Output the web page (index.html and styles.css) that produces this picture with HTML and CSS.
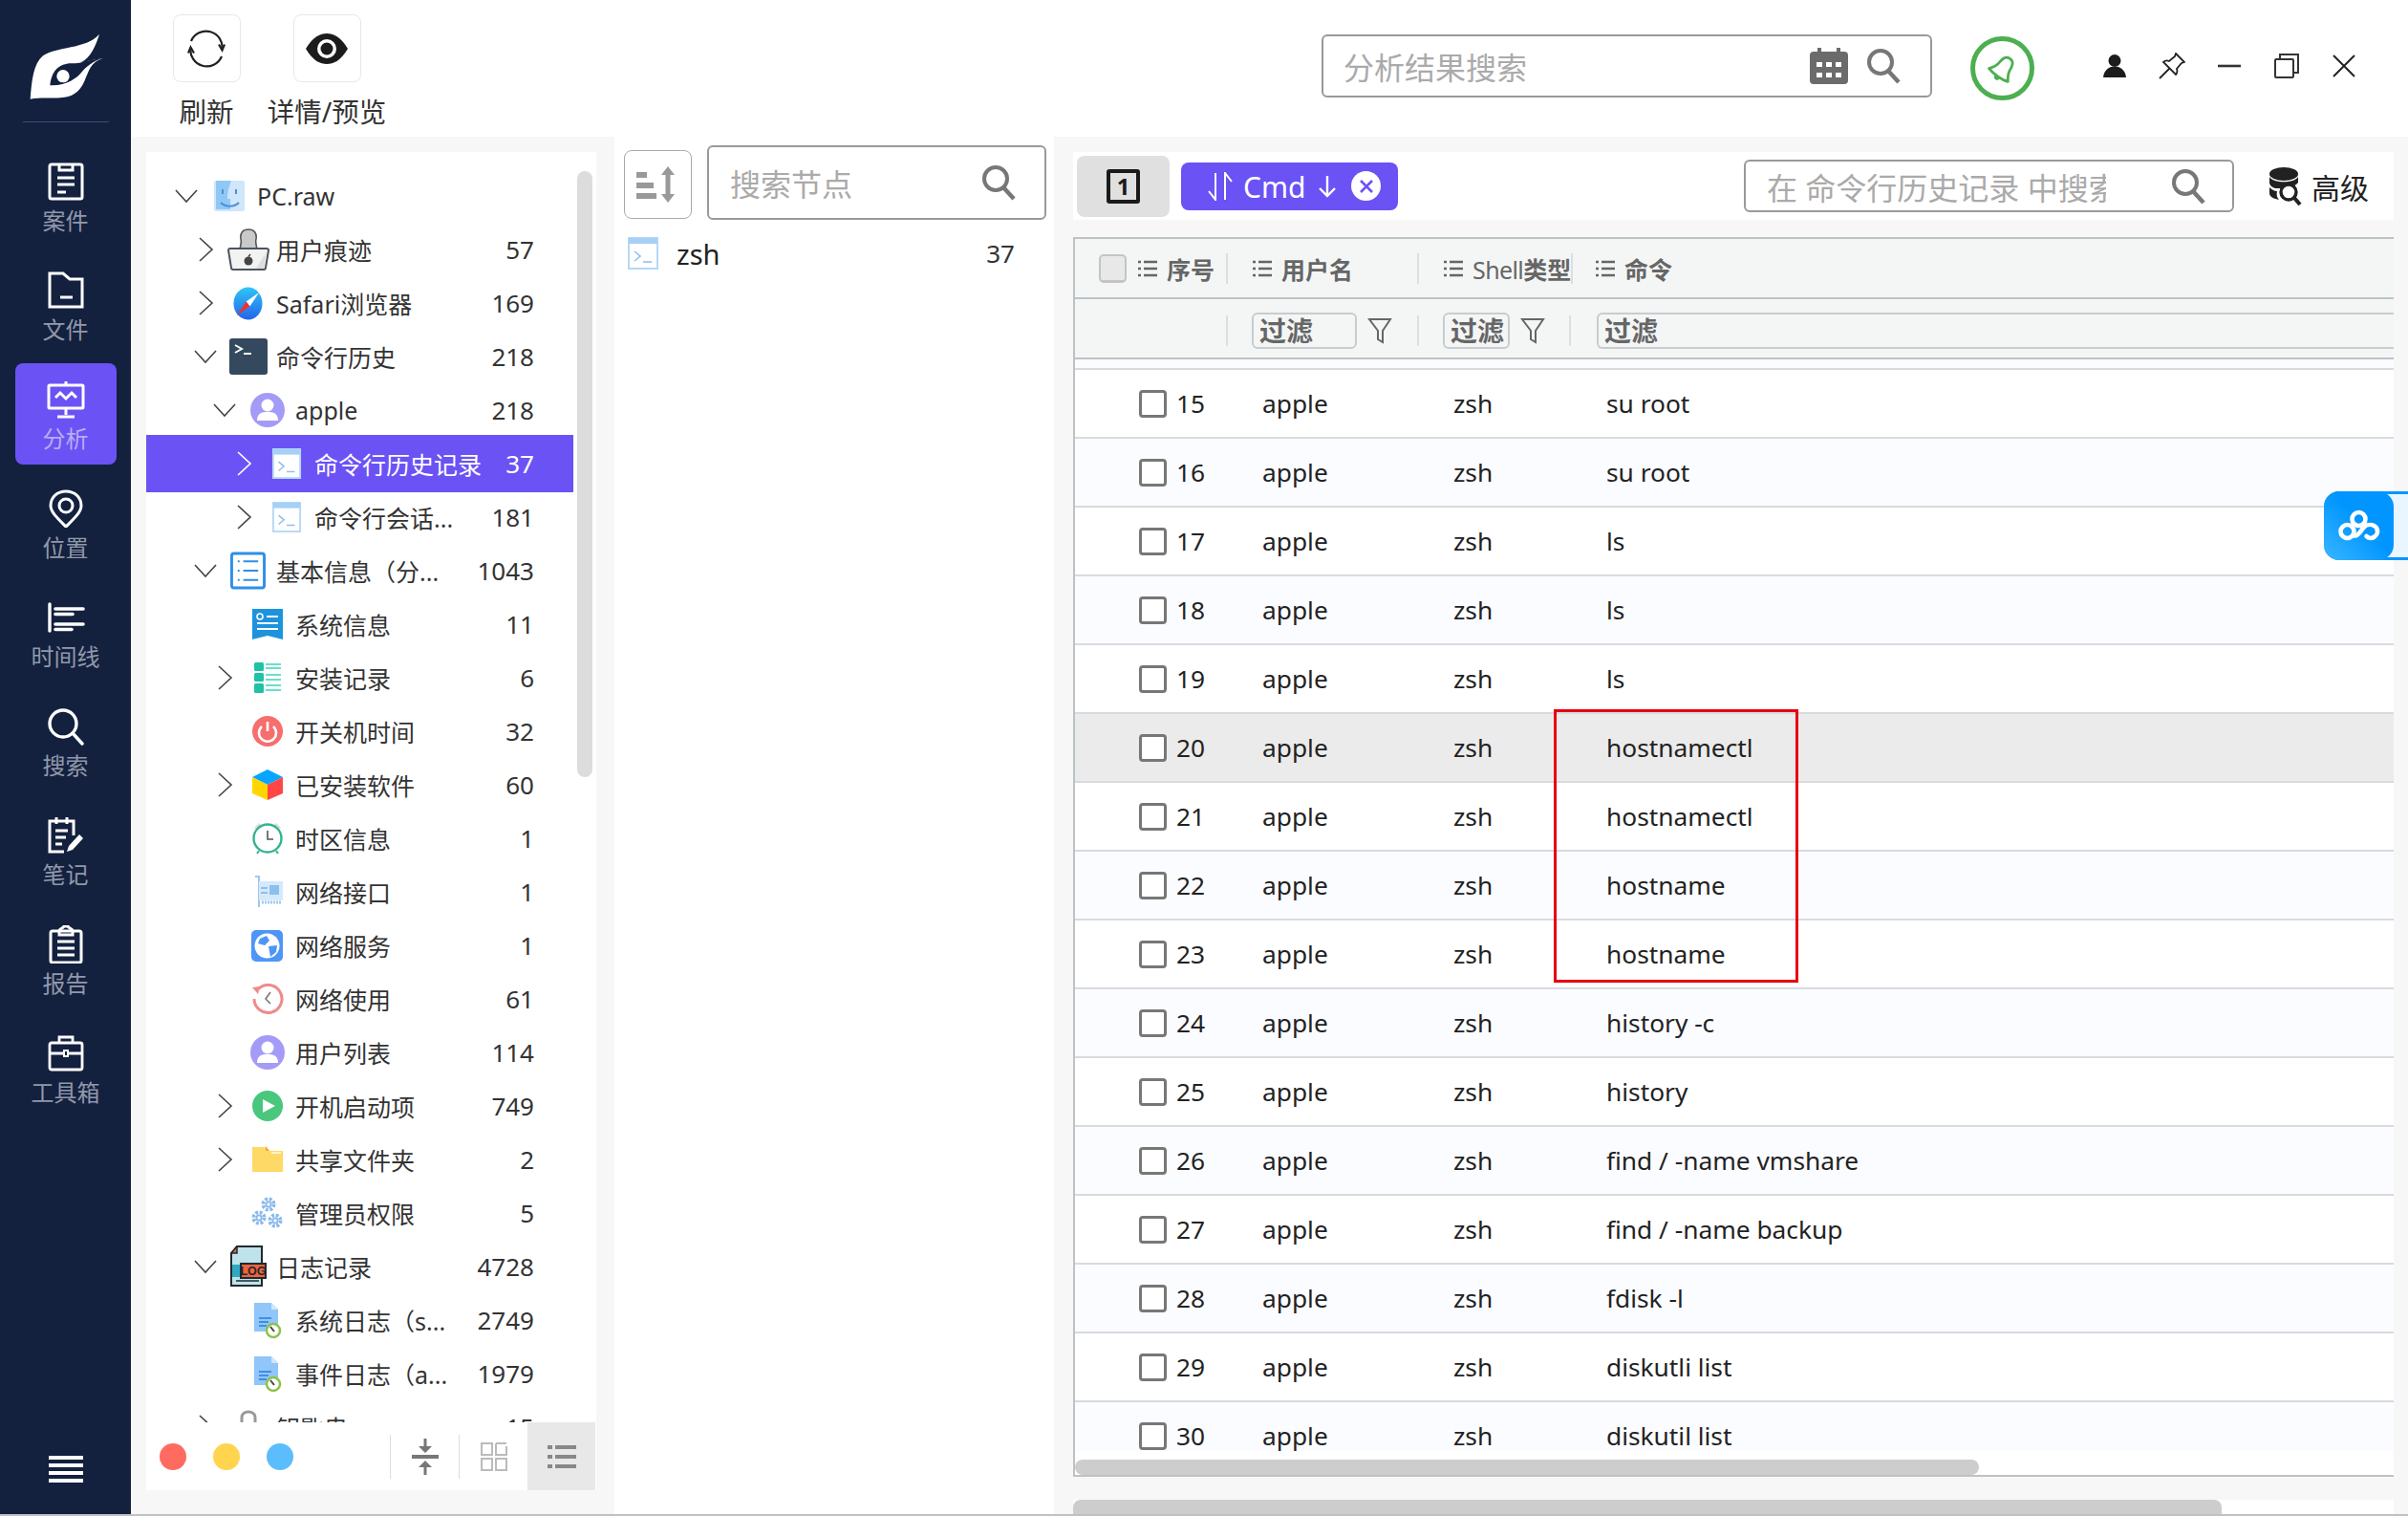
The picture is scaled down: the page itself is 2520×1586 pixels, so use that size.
FILE: index.html
```html
<!DOCTYPE html>
<html>
<head>
<meta charset="utf-8">
<title>分析</title>
<link rel="stylesheet" href="styles.css">
</head>
<body>
  <svg class="defs" width="0" height="0">
    <symbol id="chev-r" viewBox="0 0 30 30"><path d="M9 3 L22 15 L9 27" fill="none" stroke="currentColor" stroke-width="1.6"/></symbol>
    <symbol id="chev-d" viewBox="0 0 30 30"><path d="M4 9 L15 21 L26 9" fill="none" stroke="currentColor" stroke-width="1.6"/></symbol>
    <symbol id="term-win" viewBox="0 0 32 34">
      <rect x="1" y="1" width="30" height="32" fill="#fff" stroke="#b5d8f7" stroke-width="2"/>
      <rect x="1" y="1" width="30" height="6" fill="#a7d0f7"/>
      <path d="M7 15 L13 20 L7 25" fill="none" stroke="#8fc0f0" stroke-width="1.6"/>
      <path d="M16 26 H25" stroke="#8fc0f0" stroke-width="1.6"/>
    </symbol>
    <symbol id="user" viewBox="0 0 36 36">
      <circle cx="18" cy="18" r="18" fill="#a39bf7"/>
      <circle cx="18" cy="13" r="6.5" fill="#fff"/>
      <path d="M7 29 C7 21 12 20 18 20 C24 20 29 21 29 29 Z" fill="#fff"/>
    </symbol>
    <symbol id="log-file" viewBox="0 0 32 40">
      <path d="M2 2 H20 L27 9 V32 H2 Z" fill="#90c6f9"/>
      <path d="M20 2 L27 9 H20 Z" fill="#cfe6fc"/>
      <path d="M7 18 H20 M7 22 H17 M7 26 H15" stroke="#3f8fe0" stroke-width="2"/>
      <circle cx="22" cy="31" r="7" fill="#fff" stroke="#8bc34a" stroke-width="2.5"/>
      <path d="M19 27 L23 32" stroke="#444" stroke-width="2"/>
    </symbol>
    <symbol id="mag" viewBox="0 0 36 38">
      <circle cx="15" cy="15" r="12" fill="none" stroke="#777" stroke-width="4"/>
      <path d="M23 24 L34 36" stroke="#777" stroke-width="4.5"/>
    </symbol>
    <symbol id="lines" viewBox="0 0 20 20">
      <path d="M0 3 H3 M6 3 H20 M0 10 H3 M6 10 H20 M0 17 H3 M6 17 H20" stroke="#666" stroke-width="2.4"/>
    </symbol>
    <symbol id="funnel" viewBox="0 0 26 28">
      <path d="M2 2 H24 L16 14 V26 L11 23 V14 Z" fill="none" stroke="#666" stroke-width="2"/>
    </symbol>
    <symbol id="gear" viewBox="0 0 16 16">
      <circle cx="8" cy="8" r="2.600" fill="none" stroke="#8ab8ec" stroke-width="1.800"/>
      <circle cx="8" cy="8" r="5.600" fill="none" stroke="#8ab8ec" stroke-width="3.800" stroke-dasharray="2.800 1.600"/>
    </symbol>
  </svg>

  <div class="app">
    <aside class="sidebar">
      <div class="logo">
        <svg viewBox="0 0 411 411" width="137" height="137">
          <path d="M95 281 C100 220 105 170 135 145 C175 115 270 125 312 77 C300 115 285 150 255 165 L323 153 C285 165 280 190 265 225 C250 260 225 275 190 277 C160 279 125 276 95 281 Z" fill="#fff"/>
          <path d="M157 238 C160 205 175 175 210 170 C230 167 245 172 262 163 L323 153 C290 162 270 180 255 198 C240 215 210 240 157 238 Z" fill="#13213f"/>
          <circle cx="198" cy="209" r="20" fill="#fff"/>
        </svg>
      </div>
      <nav class="nav">
        <a class="nav-item">
          <svg viewBox="0 0 40 40" width="40" height="40" fill="none" stroke="#fff" stroke-width="3">
            <rect x="3" y="2" width="34" height="36" rx="2"/><path d="M13 2 V8 H27 V2 M11 16 H29 M11 23 H29 M11 31 H20"/>
          </svg>
          <span>案件</span>
        </a>
        <a class="nav-item">
          <svg viewBox="0 0 40 40" width="40" height="40" fill="none" stroke="#fff" stroke-width="3">
            <path d="M3 37 V2 H17 L24 8 H37 V37 Z M14 27 H27"/>
          </svg>
          <span>文件</span>
        </a>
        <a class="nav-item active">
          <svg viewBox="0 0 40 40" width="40" height="40" fill="none" stroke="#fff" stroke-width="3">
            <rect x="2" y="5" width="36" height="24" rx="1"/><path d="M20 1 V5 M20 29 V36 M11 38 H29 M9 18 L14 13 L20 19 L26 13 L31 18"/>
          </svg>
          <span>分析</span>
        </a>
        <a class="nav-item">
          <svg viewBox="0 0 40 40" width="40" height="40" fill="none" stroke="#fff" stroke-width="3">
            <path d="M20 39 C12 31 4 24 4 17 C4 8 11 2 20 2 C29 2 36 8 36 17 C36 24 28 31 20 39 Z"/><circle cx="20" cy="17" r="7"/>
          </svg>
          <span>位置</span>
        </a>
        <a class="nav-item">
          <svg viewBox="0 0 40 40" width="40" height="40" fill="none" stroke="#fff" stroke-linecap="round">
            <path d="M3 6 V34" stroke-width="3.400"/>
            <path d="M9 11 H38 M9 16.500 H27 M9 27 H38 M9 32.500 H26" stroke-width="3.600"/>
          </svg>
          <span>时间线</span>
        </a>
        <a class="nav-item">
          <svg viewBox="0 0 40 40" width="40" height="40" fill="none" stroke="#fff" stroke-width="3.400" stroke-linecap="round">
            <circle cx="17" cy="17" r="14"/><path d="M27 27 L37 38"/>
          </svg>
          <span>搜索</span>
        </a>
        <a class="nav-item">
          <svg viewBox="0 0 40 40" width="40" height="40" fill="none" stroke="#fff" stroke-width="3">
            <path d="M28 20 V5 H3 V37 H18 M10 1 V8 M21 1 V8 M9 15 H22 M9 22 H20 M9 29 H16"/>
            <path d="M21 37 L23 31 L34 19 L38 23 L27 35 Z" fill="#fff" stroke="none"/>
          </svg>
          <span>笔记</span>
        </a>
        <a class="nav-item">
          <svg viewBox="0 0 40 40" width="40" height="40" fill="none" stroke="#fff" stroke-width="3">
            <rect x="4" y="6" width="32" height="33" rx="2"/><path d="M13 6 C13 3 17 4 18 1 H22 C23 4 27 3 27 6 V10 H13 Z M11 17 H29 M11 24 H29 M11 31 H29"/>
          </svg>
          <span>报告</span>
        </a>
        <a class="nav-item">
          <svg viewBox="0 0 40 40" width="40" height="40" fill="none" stroke="#fff" stroke-width="2.800">
            <rect x="3" y="9" width="34" height="28" rx="2"/><path d="M13 9 V3 H27 V9 M3 20 H17 M23 20 H37"/><path d="M18 17 H22 V23 H18 Z" stroke-width="2"/>
          </svg>
          <span>工具箱</span>
        </a>
      </nav>
      <div class="burger"><i></i><i></i><i></i><i></i></div>
    </aside>

    <main class="main">
      <header class="topbar">
        <div class="tools">
          <div class="tool">
            <div class="tool-btn">
              <svg viewBox="0 0 40 40" width="40" height="40" fill="none" stroke="#222" stroke-width="2.200">
                <path d="M4 12 A17 17 0 0 1 36.500 21"/><path d="M33 15.500 L36.500 21.500 L39 15.500"/>
                <path d="M36 28 A17 17 0 0 1 3.500 19"/><path d="M7 24.500 L3.500 18.500 L1 24.500"/>
              </svg>
            </div>
            <span>刷新</span>
          </div>
          <div class="tool">
            <div class="tool-btn">
              <svg viewBox="0 0 44 32" width="44" height="32">
                <path d="M0 16 C8 3 15 0 22 0 C29 0 36 3 44 16 C36 29 29 32 22 32 C15 32 8 29 0 16 Z" fill="#1c1c1c"/>
                <circle cx="22" cy="16" r="10" fill="#fff"/><circle cx="22" cy="16" r="6.5" fill="#1c1c1c"/>
              </svg>
            </div>
            <span>详情/预览</span>
          </div>
        </div>
        <div class="top-right">
          <div class="global-search">
            <span class="ph">分析结果搜索</span>
            <svg class="cal" viewBox="0 0 40 38" width="40" height="38">
              <rect x="0" y="4" width="40" height="34" rx="4" fill="#6b6b6b"/>
              <rect x="8" y="0" width="4" height="8" fill="#6b6b6b"/><rect x="28" y="0" width="4" height="8" fill="#6b6b6b"/>
              <g fill="#fff"><rect x="7" y="15" width="6" height="5"/><rect x="17" y="15" width="6" height="5"/><rect x="27" y="15" width="6" height="5"/><rect x="7" y="26" width="6" height="5"/><rect x="17" y="26" width="6" height="5"/><rect x="27" y="26" width="6" height="5"/></g>
            </svg>
            <svg class="mag" width="38" height="38"><use href="#mag"/></svg>
          </div>
          <div class="notice">
            <svg viewBox="0 0 32 32" width="32" height="32" fill="none" stroke="#4caf50" stroke-width="2.800" stroke-linejoin="round">
              <g transform="rotate(35 16 16)"><path d="M16 3 C10 3 9.500 9 9 14 C8.500 18 6 21 4 24 C10 26 22 26 28 24 C26 21 23.500 18 23 14 C22.500 9 22 3 16 3 Z"/><path d="M14 26 C14.500 29 17.500 29 18 26"/></g>
            </svg>
          </div>
          <div class="win-btns">
            <span class="win-btn">
              <svg viewBox="0 0 24 24" width="24" height="24" fill="#1c1c1c"><circle cx="12" cy="6.5" r="6.5"/><path d="M0 24 C1 17 4 15 8 13 H16 C20 15 23 17 24 24 Z"/></svg>
            </span>
            <span class="win-btn">
              <svg viewBox="0 0 28 28" width="28" height="28" fill="none" stroke="#222" stroke-width="1.8"><path d="M18 1 L27 10 L24 11 L19 17 C20 20 19 22 18 23 L5 10 C7 8 9 8 11 9 L17 4 Z M11 17 L1 27"/></svg>
            </span>
            <span class="win-btn">
              <svg viewBox="0 0 24 24" width="24" height="24"><path d="M0 12 H24" stroke="#333" stroke-width="2.6"/></svg>
            </span>
            <span class="win-btn">
              <svg viewBox="0 0 26 26" width="26" height="26" fill="none" stroke="#333" stroke-width="2"><rect x="1" y="6" width="19" height="19" rx="1"/><path d="M6 6 V1 H25 V20 H20"/></svg>
            </span>
            <span class="win-btn">
              <svg viewBox="0 0 24 24" width="24" height="24" fill="none" stroke="#222" stroke-width="2"><path d="M1 1 L23 23 M23 1 L1 23"/></svg>
            </span>
          </div>
        </div>
      </header>

      <div class="content">
        <section class="tree-panel">
          <div class="tree-body">
            <div class="tree-list">
              <div class="row l0"><svg class="chev"><use href="#chev-d"/></svg><span class="ico">
                <svg viewBox="0 0 32 32" width="32" height="32"><rect width="32" height="32" rx="2" fill="#cfe6fb"/><path d="M2 0 H18 C15 8 14 14 14 19 H17 V30 H2 Z" fill="#90c8f5"/><path d="M9 9 V14 M23 9 V14 M7 23 C12 28 21 28 26 23" stroke="#4a90d9" stroke-width="2" fill="none"/></svg>
              </span><span class="name">PC.raw</span><span class="num"></span></div>

              <div class="row l1"><svg class="chev"><use href="#chev-r"/></svg><span class="ico">
                <svg viewBox="0 0 44 44" width="44" height="44"><path d="M13 22 C14 16 15 14 14 11 C13 5 16 1 22 1 C28 1 31 5 30 11 C29 14 30 16 31 22 Z" fill="#c9c9c9" stroke="#555" stroke-width="1.600"/><path d="M3 21 H41 C42 21 43 22 43 23 L40 41 C40 42 39 43 38 43 H6 C5 43 4 42 4 41 L1 23 C1 22 2 21 3 21 Z" fill="#f2f2f2" stroke="#4a5560" stroke-width="2"/><path d="M30 42 L40 26 L38 42 Z" fill="#ddd"/><circle cx="22" cy="34" r="4.500" fill="#444"/><path d="M22 29.500 L24 27" stroke="#444" stroke-width="1.500"/></svg>
              </span><span class="name">用户痕迹</span><span class="num">57</span></div>

              <div class="row l1"><svg class="chev"><use href="#chev-r"/></svg><span class="ico">
                <svg viewBox="0 0 32 36" width="31" height="35"><defs><linearGradient id="saf" x1="0" y1="0" x2="0" y2="1"><stop offset="0" stop-color="#2fc6f6"/><stop offset="1" stop-color="#2364ea"/></linearGradient></defs><ellipse cx="16" cy="18" rx="15.5" ry="17.5" fill="url(#saf)"/><path d="M14 16 L28 6 L18 21 Z" fill="#fff"/><path d="M14 16 L18 21 L4 31 Z" fill="#f0302c"/></svg>
              </span><span class="name">Safari浏览器</span><span class="num">169</span></div>

              <div class="row l1"><svg class="chev"><use href="#chev-d"/></svg><span class="ico">
                <svg viewBox="0 0 40 38" width="40" height="38"><rect width="40" height="38" rx="3" fill="#34495e"/><path d="M6 7 L13 11 L6 15" fill="none" stroke="#fff" stroke-width="2"/><path d="M15 16 H23" stroke="#fff" stroke-width="2"/></svg>
              </span><span class="name">命令行历史</span><span class="num">218</span></div>

              <div class="row l2"><svg class="chev"><use href="#chev-d"/></svg><span class="ico"><svg width="36" height="36"><use href="#user"/></svg></span><span class="name">apple</span><span class="num">218</span></div>

              <div class="row l3 selected"><svg class="chev"><use href="#chev-r"/></svg><span class="ico"><svg width="32" height="32"><use href="#term-win"/></svg></span><span class="name">命令行历史记录</span><span class="num">37</span></div>

              <div class="row l3"><svg class="chev"><use href="#chev-r"/></svg><span class="ico"><svg width="32" height="32"><use href="#term-win"/></svg></span><span class="name">命令行会话...</span><span class="num">181</span></div>

              <div class="row l1"><svg class="chev"><use href="#chev-d"/></svg><span class="ico">
                <svg viewBox="0 0 38 40" width="37" height="40"><rect x="1.5" y="1.5" width="35" height="37" rx="2.5" fill="#fff" stroke="#2f8fe6" stroke-width="3"/><path d="M8 10 H10 M14 10 H30 M8 20 H10 M14 20 H30 M8 30 H10 M14 30 H30" stroke="#2f8fe6" stroke-width="2"/></svg>
              </span><span class="name">基本信息（分...</span><span class="num">1043</span></div>

              <div class="row l2 leaf"><i class="chev"></i><span class="ico">
                <svg viewBox="0 0 32 32" width="32" height="32"><path d="M0 0 H32 V32 L16 28 L0 32 Z" fill="#1d93de"/><circle cx="8" cy="8" r="3" fill="none" stroke="#fff" stroke-width="1.6"/><path d="M15 8 H27 M5 15 H27 M5 21 H27" stroke="#fff" stroke-width="2"/></svg>
              </span><span class="name">系统信息</span><span class="num">11</span></div>

              <div class="row l2"><svg class="chev"><use href="#chev-r"/></svg><span class="ico">
                <svg viewBox="0 0 28 32" width="28" height="32" fill="#1fc2a5"><rect width="10" height="9" rx="1.5"/><rect y="11" width="10" height="9" rx="1.5"/><rect y="22" width="10" height="10" rx="1.5"/><path d="M12 2 H28 M12 6 H28 M12 13 H28 M12 18 H28 M12 24 H28 M12 29 H28" stroke="#38d6bb" stroke-width="1.6"/></svg>
              </span><span class="name">安装记录</span><span class="num">6</span></div>

              <div class="row l2 leaf"><i class="chev"></i><span class="ico">
                <svg viewBox="0 0 32 32" width="32" height="32"><circle cx="16" cy="16" r="16" fill="#f76e6e"/><path d="M10 11 A9 9 0 1 0 22 11" fill="none" stroke="#fff" stroke-width="2.6"/><path d="M16 6 V16" stroke="#fff" stroke-width="2.6"/></svg>
              </span><span class="name">开关机时间</span><span class="num">32</span></div>

              <div class="row l2"><svg class="chev"><use href="#chev-r"/></svg><span class="ico">
                <svg viewBox="0 0 32 32" width="32" height="32"><path d="M16 0 L32 8 L16 16 L0 8 Z" fill="#08a5ff"/><path d="M0 8 L16 16 V32 L0 25 Z" fill="#ffd500"/><path d="M32 8 L16 16 V32 L32 25 Z" fill="#ff4646"/></svg>
              </span><span class="name">已安装软件</span><span class="num">60</span></div>

              <div class="row l2 leaf"><i class="chev"></i><span class="ico">
                <svg viewBox="0 0 34 34" width="34" height="34"><path d="M4 7 L9 2 M30 7 L25 2" stroke="#ddd" stroke-width="3"/><circle cx="17" cy="17" r="14.5" fill="#fff" stroke="#33b38f" stroke-width="2.4"/><path d="M17 9 V18 H23" fill="none" stroke="#555" stroke-width="1.6"/><path d="M8 30 L6 33 M26 30 L28 33" stroke="#33b38f" stroke-width="2"/></svg>
              </span><span class="name">时区信息</span><span class="num">1</span></div>

              <div class="row l2 leaf"><i class="chev"></i><span class="ico">
                <svg viewBox="0 0 32 34" width="32" height="34"><path d="M3 1 H7 V33" fill="none" stroke="#9cc9f2" stroke-width="2"/><rect x="7" y="6" width="25" height="20" fill="#d6e9fa"/><rect x="18" y="10" width="10" height="10" fill="#8dbfee"/><path d="M9 13 H16 M9 18 H16" stroke="#8dbfee" stroke-width="2"/><path d="M10 28 H30" stroke="#9cc9f2" stroke-width="3" stroke-dasharray="2 1"/></svg>
              </span><span class="name">网络接口</span><span class="num">1</span></div>

              <div class="row l2 leaf"><i class="chev"></i><span class="ico">
                <svg viewBox="0 0 33 33" width="33" height="33"><rect width="33" height="33" rx="5" fill="#4d96f7"/><circle cx="16.500" cy="16.500" r="13" fill="#fff"/><path d="M9 9 L16 6 L19 11 L14 16 L7 14 Z M18 17 L27 16 L26 23 L20 28 Z" fill="#4d96f7"/></svg>
              </span><span class="name">网络服务</span><span class="num">1</span></div>

              <div class="row l2 leaf"><i class="chev"></i><span class="ico">
                <svg viewBox="0 0 34 34" width="34" height="34" fill="none"><path d="M7 7 A14.500 14.500 0 1 1 3 17" stroke="#f08a8a" stroke-width="3"/><path d="M1 5 L9 4 L7 12 Z" fill="#f08a8a"/><path d="M20 10 L15 17 L20 22" stroke="#777" stroke-width="1.6"/></svg>
              </span><span class="name">网络使用</span><span class="num">61</span></div>

              <div class="row l2 leaf"><i class="chev"></i><span class="ico"><svg width="36" height="36"><use href="#user"/></svg></span><span class="name">用户列表</span><span class="num">114</span></div>

              <div class="row l2"><svg class="chev"><use href="#chev-r"/></svg><span class="ico">
                <svg viewBox="0 0 32 32" width="32" height="32"><circle cx="16" cy="16" r="16" fill="#48c77d"/><path d="M11 9 L24 16 L11 23 Z" fill="#fff"/></svg>
              </span><span class="name">开机启动项</span><span class="num">749</span></div>

              <div class="row l2"><svg class="chev"><use href="#chev-r"/></svg><span class="ico">
                <svg viewBox="0 0 32 28" width="32" height="28"><path d="M0 1 H14 L18 5 H32 V27 H0 Z" fill="#ffd966"/><path d="M14 0 L18 5 H14 Z" fill="#f7a33a"/><path d="M20 7 H30" stroke="#fff3c9" stroke-width="2"/></svg>
              </span><span class="name">共享文件夹</span><span class="num">2</span></div>

              <div class="row l2 leaf"><i class="chev"></i><span class="ico">
                <svg viewBox="0 0 34 34" width="34" height="34"><use href="#gear" x="10" y="0" width="16" height="16"/><use href="#gear" x="0" y="14" width="16" height="16"/><use href="#gear" x="17" y="17" width="16" height="16"/></svg>
              </span><span class="name">管理员权限</span><span class="num">5</span></div>

              <div class="row l1"><svg class="chev"><use href="#chev-d"/></svg><span class="ico">
                <svg viewBox="0 0 38 44" width="38" height="44"><path d="M7 1 H33 V42 H1 V8 Z" fill="#bfe3ea" stroke="#1f2a30" stroke-width="2"/><path d="M7 1 V8 H1 Z" fill="#f0623c" stroke="#1f2a30" stroke-width="1.500"/><rect x="2" y="20" width="11" height="13" fill="#2fa8c0"/><rect x="11" y="19" width="26" height="15" fill="#f0623c" stroke="#1f2a30" stroke-width="2"/><path d="M6 37 H30" stroke="#1f2a30" stroke-width="1.500"/><text x="24" y="31" class="log-text">LOG</text></svg>
              </span><span class="name">日志记录</span><span class="num">4728</span></div>

              <div class="row l2 leaf"><i class="chev"></i><span class="ico"><svg width="32" height="40"><use href="#log-file"/></svg></span><span class="name">系统日志（s...</span><span class="num">2749</span></div>

              <div class="row l2 leaf"><i class="chev"></i><span class="ico"><svg width="32" height="40"><use href="#log-file"/></svg></span><span class="name">事件日志（a...</span><span class="num">1979</span></div>

              <div class="row l1"><svg class="chev"><use href="#chev-r"/></svg><span class="ico">
                <svg viewBox="0 0 32 40" width="32" height="40"><path d="M9 16 V10 C9 2 23 2 23 10 V16" fill="none" stroke="#999" stroke-width="3"/><rect x="4" y="15" width="24" height="22" rx="3" fill="#c4c4c4"/></svg>
              </span><span class="name">钥匙串</span><span class="num">15</span></div>
            </div>
            <div class="tree-scroll"></div>
          </div>
          <div class="tree-foot">
            <i class="dot red"></i><i class="dot yellow"></i><i class="dot blue"></i>
            <div class="foot-tools">
              <i class="foot-sep"></i>
              <span class="foot-btn">
                <svg viewBox="0 0 28 38" width="28" height="38" fill="#777"><path d="M12.500 0 H15.500 V8 H21 L14 15 L7 8 H12.500 Z"/><rect x="0" y="17" width="28" height="4"/><path d="M14 23 L21 30 H15.500 V38 H12.500 V30 H7 Z"/></svg>
              </span>
              <i class="foot-sep"></i>
              <span class="foot-btn">
                <svg viewBox="0 0 28 30" width="28" height="30" fill="none" stroke="#bbb" stroke-width="2"><rect x="1" y="1" width="11" height="12"/><path d="M16 1 H27 M27 4 V13 H16 V1"/><rect x="1" y="17" width="11" height="12"/><rect x="16" y="17" width="11" height="12"/></svg>
              </span>
              <span class="foot-btn on">
                <svg viewBox="0 0 30 24" width="30" height="24" fill="#888"><rect y="0" width="5" height="4"/><rect x="8" y="0" width="22" height="4"/><rect y="10" width="5" height="4"/><rect x="8" y="10" width="22" height="4"/><rect y="20" width="5" height="4"/><rect x="8" y="20" width="22" height="4"/></svg>
              </span>
            </div>
          </div>
        </section>

        <section class="mid-panel">
          <div class="mid-head">
            <div class="sort-btn">
              <svg viewBox="0 0 46 38" width="46" height="38" fill="#999"><rect x="0" y="6" width="11" height="6"/><rect x="0" y="17" width="18" height="6"/><rect x="0" y="28" width="21" height="6"/><path d="M33 0 L40 9 H35.500 V29 H40 L33 38 L26 29 H30.500 V9 H26 Z"/></svg>
            </div>
            <div class="node-search">
              <span class="ph">搜索节点</span>
              <svg class="mag" width="36" height="38"><use href="#mag"/></svg>
            </div>
          </div>
          <div class="mid-row">
            <svg width="34" height="34"><use href="#term-win"/></svg>
            <span class="mid-name">zsh</span>
            <span class="num">37</span>
          </div>
        </section>

        <section class="right-panel">
          <div class="toolbar">
            <div class="page-btn"><span class="page-num">1</span></div>
            <div class="chip">
              <svg viewBox="0 0 28 30" width="28" height="30" fill="none" stroke="#fff" stroke-width="2"><path d="M9 1 V29 L2 20 M19 29 V1 L26 10"/></svg>
              <span class="chip-label">Cmd</span>
              <svg viewBox="0 0 20 24" width="20" height="24" fill="none" stroke="#fff" stroke-width="2.400"><path d="M10 1 V22 M2 14 L10 22 L18 14"/></svg>
              <span class="chip-x">
                <svg viewBox="0 0 14 14" width="14" height="14" fill="none" stroke="#6b52f5" stroke-width="2.600"><path d="M1 1 L13 13 M13 1 L1 13"/></svg>
              </span>
            </div>
            <div class="table-search">
              <div class="ph-clip"><span class="ph">在 命令行历史记录 中搜索</span></div>
              <svg class="mag" width="36" height="38"><use href="#mag"/></svg>
            </div>
            <div class="adv">
              <svg viewBox="0 0 36 40" width="36" height="40">
                <ellipse cx="16" cy="7" rx="15" ry="7" fill="#222"/><path d="M1 10 C5 17 27 17 31 10 V16 C27 22 12 22 7 22 C4 21 1 19 1 16 Z" fill="#222"/><path d="M1 21 C3 23 6 25 9 25 C8 29 9 32 11 34 C6 33 1 31 1 27 Z" fill="#222"/>
                <circle cx="21" cy="26" r="8" fill="#fff" stroke="#222" stroke-width="3.400"/><path d="M27 32 L33 39" stroke="#222" stroke-width="4"/>
              </svg>
              <span>高级</span>
            </div>
          </div>

          <div class="table">
            <div class="thead cols">
              <div class="th th-first"><i class="head-check"></i><svg width="20" height="20"><use href="#lines"/></svg><b>序号</b><i class="col-sep"></i></div>
              <div class="th"><svg width="20" height="20"><use href="#lines"/></svg><b>用户名</b><i class="col-sep"></i></div>
              <div class="th"><svg width="20" height="20"><use href="#lines"/></svg><b><span class="thin">Shell</span>类型</b><i class="col-sep"></i></div>
              <div class="th th-last"><svg width="20" height="20"><use href="#lines"/></svg><b>命令</b></div>
            </div>
            <div class="tfilter cols">
              <div class="tf"><i class="col-sep"></i></div>
              <div class="tf"><span class="filter-input w110">过滤</span><svg class="funnel" width="26" height="28"><use href="#funnel"/></svg><i class="col-sep"></i></div>
              <div class="tf"><span class="filter-input w70">过滤</span><svg class="funnel" width="26" height="28"><use href="#funnel"/></svg><i class="col-sep"></i></div>
              <div class="tf tf-last"><span class="filter-input fill">过滤</span></div>
            </div>
            <div class="tband"></div>
            <div class="tbody">
              <div class="tr cols"><div class="td td-first"><i class="check"></i>15</div><div class="td">apple</div><div class="td">zsh</div><div class="td td-cmd">su root</div></div>
              <div class="tr cols"><div class="td td-first"><i class="check"></i>16</div><div class="td">apple</div><div class="td">zsh</div><div class="td td-cmd">su root</div></div>
              <div class="tr cols"><div class="td td-first"><i class="check"></i>17</div><div class="td">apple</div><div class="td">zsh</div><div class="td td-cmd">ls</div></div>
              <div class="tr cols"><div class="td td-first"><i class="check"></i>18</div><div class="td">apple</div><div class="td">zsh</div><div class="td td-cmd">ls</div></div>
              <div class="tr cols"><div class="td td-first"><i class="check"></i>19</div><div class="td">apple</div><div class="td">zsh</div><div class="td td-cmd">ls</div></div>
              <div class="tr cols hover"><div class="td td-first"><i class="check"></i>20</div><div class="td">apple</div><div class="td">zsh</div><div class="td td-cmd">hostnamectl</div></div>
              <div class="tr cols"><div class="td td-first"><i class="check"></i>21</div><div class="td">apple</div><div class="td">zsh</div><div class="td td-cmd">hostnamectl</div></div>
              <div class="tr cols"><div class="td td-first"><i class="check"></i>22</div><div class="td">apple</div><div class="td">zsh</div><div class="td td-cmd">hostname</div></div>
              <div class="tr cols"><div class="td td-first"><i class="check"></i>23</div><div class="td">apple</div><div class="td">zsh</div><div class="td td-cmd">hostname</div></div>
              <div class="tr cols"><div class="td td-first"><i class="check"></i>24</div><div class="td">apple</div><div class="td">zsh</div><div class="td td-cmd">history -c</div></div>
              <div class="tr cols"><div class="td td-first"><i class="check"></i>25</div><div class="td">apple</div><div class="td">zsh</div><div class="td td-cmd">history</div></div>
              <div class="tr cols"><div class="td td-first"><i class="check"></i>26</div><div class="td">apple</div><div class="td">zsh</div><div class="td td-cmd">find / -name vmshare</div></div>
              <div class="tr cols"><div class="td td-first"><i class="check"></i>27</div><div class="td">apple</div><div class="td">zsh</div><div class="td td-cmd">find / -name backup</div></div>
              <div class="tr cols"><div class="td td-first"><i class="check"></i>28</div><div class="td">apple</div><div class="td">zsh</div><div class="td td-cmd">fdisk -l</div></div>
              <div class="tr cols"><div class="td td-first"><i class="check"></i>29</div><div class="td">apple</div><div class="td">zsh</div><div class="td td-cmd">diskutli list</div></div>
              <div class="tr cols"><div class="td td-first"><i class="check"></i>30</div><div class="td">apple</div><div class="td">zsh</div><div class="td td-cmd">diskutil list</div></div>
              <div class="mark-box"></div>
            </div>
            <div class="tscroll"><div class="tscroll-thumb"></div></div>
          </div>
          <div class="outer-scroll"><div class="outer-thumb"></div></div>
        </section>
      </div>
    </main>
  </div>
  <div class="bottom-line"></div>

  <div class="float-tab">
    <div class="float-tile">
      <svg viewBox="0 0 73 72" width="73" height="72" fill="none" stroke="#fff" stroke-width="4.600" stroke-linecap="round">
        <circle cx="36.500" cy="29" r="7"/><circle cx="24.500" cy="42" r="7"/>
        <path d="M30.500 46 C33.500 48 37.500 44 40.500 39 C43.500 35 48.500 34 52.500 36 C56.500 38 57.500 44 53.500 47 C50.500 50 46.500 49 44.500 47"/>
      </svg>
    </div>
  </div>
</body>
</html>
```

FILE: styles.css
```css
/* page frame */
* {
  box-sizing: border-box;
}

html, body {
  margin: 0;
  width: 2520px;
  height: 1586px;
  overflow: hidden;
  background: #fff;
  font-family: "Noto Sans", "Noto Sans CJK SC", sans-serif;
  color: #333;
}

.defs {
  position: absolute;
}

.app {
  display: flex;
  height: 1584px;
}

.bottom-line {
  height: 2px;
  background: #bcc2c6;
}

/* left navigation */
.sidebar {
  width: 137px;
  flex: none;
  background: #13213f;
  display: flex;
  flex-direction: column;
  align-items: center;
}

.logo {
  width: 90px;
  height: 128px;
  padding-top: 10px;
  border-bottom: 1px solid #3c4c78;
  display: flex;
  justify-content: center;
}

.logo svg {
  flex: none;
}

.nav {
  margin-top: 24px;
  display: flex;
  flex-direction: column;
  gap: 8px;
}

.nav-item {
  width: 106px;
  height: 106px;
  padding-top: 18px;
  border-radius: 8px;
  display: flex;
  flex-direction: column;
  align-items: center;
  color: #9198aa;
  font-size: 24px;
  line-height: 42px;
}

.nav-item svg {
  display: block;
  flex: none;
}

.nav-item.active {
  background: #6b52f5;
  color: #b7aef3;
}

.burger {
  margin-top: auto;
  margin-bottom: 33px;
  width: 36px;
  display: flex;
  flex-direction: column;
  gap: 4px;
}

.burger i {
  height: 4px;
  background: #fff;
}

/* top bar */
.main {
  flex: 1;
  min-width: 0;
  display: flex;
  flex-direction: column;
}

.topbar {
  height: 143px;
  flex: none;
  display: flex;
  justify-content: space-between;
}

.tools {
  display: flex;
  gap: 2px;
  padding-left: 17px;
}

.tool {
  width: 124px;
  padding-top: 15px;
  display: flex;
  flex-direction: column;
  align-items: center;
  font-size: 28.5px;
  line-height: 36px;
  color: #333;
  white-space: nowrap;
}

.tool-btn {
  width: 71px;
  height: 71px;
  margin-bottom: 13px;
  border: 1px solid #e8e8e8;
  border-radius: 8px;
  display: flex;
  align-items: center;
  justify-content: center;
}

.top-right {
  display: flex;
  align-items: flex-start;
  padding-top: 36px;
  padding-right: 37px;
}

.ph {
  color: #aaa;
  font-size: 32px;
  white-space: nowrap;
}

.global-search {
  width: 639px;
  height: 66px;
  border: 2px solid #999;
  border-radius: 6px;
  padding-left: 21px;
  padding-right: 30px;
  display: flex;
  align-items: center;
}

.global-search .cal {
  margin-left: auto;
}

.global-search .mag {
  margin-left: 18px;
}

.notice {
  width: 67px;
  height: 67px;
  margin-left: 40px;
  margin-top: 2px;
  border: 5px solid #4caf50;
  border-radius: 50%;
  display: flex;
  align-items: center;
  justify-content: center;
}

.win-btns {
  margin-left: 54px;
  display: flex;
}

.win-btn {
  width: 60px;
  height: 66px;
  display: flex;
  align-items: center;
  justify-content: center;
}

/* three panels under the top bar */
.content {
  flex: 1;
  min-height: 0;
  display: flex;
  background: #f7f7f7;
}

.tree-panel {
  width: 471px;
  margin: 16px 0 25px 16px;
  background: #fff;
  display: flex;
  flex-direction: column;
}

.tree-body {
  height: 1329px;
  display: flex;
  overflow: hidden;
}

.tree-list {
  width: 451px;
  padding-top: 18px;
  flex: none;
}

.tree-scroll {
  width: 16px;
  height: 634px;
  margin-top: 20px;
  border-radius: 8px;
  background: #dcdcdc;
}

.row {
  width: 447px;
  height: 56px;
  padding-right: 41px;
  display: flex;
  align-items: center;
  font-size: 25px;
  color: #333;
  white-space: nowrap;
}

.row.l0 { padding-left: 27px; }
.row.l1 { padding-left: 47px; }
.row.l2 { padding-left: 67px; }
.row.l3 { padding-left: 87px; }

.chev {
  width: 30px;
  height: 30px;
  flex: none;
  color: #444;
}

.ico {
  width: 59px;
  height: 56px;
  flex: none;
  display: flex;
  align-items: center;
  justify-content: center;
}

.ico svg {
  flex: none;
}

.name {
  flex: 1;
  min-width: 0;
}

.num {
  font-size: 26px;
  flex: none;
}

.row.selected {
  height: 60px;
  margin: -2px 0;
  background: #6b52f5;
  color: #fff;
}

.row.selected .chev {
  color: #fff;
}

.log-text {
  font-family: "Liberation Sans", sans-serif;
  font-size: 12.5px;
  font-weight: 700;
  fill: #1f2a30;
  text-anchor: middle;
}

.tree-foot {
  flex: 1;
  display: flex;
  align-items: center;
  padding-left: 14px;
  gap: 28px;
}

.dot {
  width: 28px;
  height: 28px;
  border-radius: 50%;
}

.dot.red { background: #ff6b60; }
.dot.yellow { background: #ffd54f; }
.dot.blue { background: #5bbdfb; }

.foot-tools {
  margin-left: auto;
  margin-right: 1px;
  align-self: stretch;
  display: flex;
  align-items: center;
}

.foot-sep {
  width: 1px;
  height: 46px;
  background: #ddd;
}

.foot-btn {
  width: 71px;
  align-self: stretch;
  display: flex;
  align-items: center;
  justify-content: center;
}

.foot-btn.on {
  background: #e8e8e8;
}

/* middle node list */
.mid-panel {
  width: 460px;
  margin-left: 19px;
  background: #fff;
}

.mid-head {
  display: flex;
  align-items: flex-start;
  gap: 16px;
  padding: 9px 8px 0 10px;
}

.sort-btn {
  width: 71px;
  height: 72px;
  margin-top: 5px;
  border: 1px solid #aaa;
  border-radius: 8px;
  display: flex;
  align-items: center;
  justify-content: center;
}

.node-search {
  width: 355px;
  height: 78px;
  border: 2px solid #999;
  border-radius: 6px;
  padding: 0 30px 0 22px;
  display: flex;
  align-items: center;
  justify-content: space-between;
}

.mid-row {
  margin-top: 18px;
  height: 34px;
  padding: 0 41px 0 13px;
  display: flex;
  align-items: center;
}

.mid-name {
  flex: 1;
  margin-left: 18px;
  font-size: 29px;
  color: #222;
}

/* result table */
.right-panel {
  width: 1382px;
  margin-left: 20px;
  padding-top: 16px;
}

.toolbar {
  height: 71px;
  background: #fff;
  display: flex;
  align-items: center;
}

.page-btn {
  width: 97px;
  height: 64px;
  margin-left: 4px;
  border-radius: 8px;
  background: #e0e0e0;
  display: flex;
  align-items: center;
  justify-content: center;
}

.page-num {
  width: 35px;
  height: 36px;
  border: 4px solid #1a1a1a;
  border-radius: 3px;
  display: flex;
  align-items: center;
  justify-content: center;
  font-size: 24px;
  line-height: 1;
  font-weight: 700;
  color: #1a1a1a;
}

.chip {
  width: 227px;
  height: 50px;
  margin-left: 12px;
  border-radius: 8px;
  background: #6b52f5;
  color: #fff;
  font-size: 30px;
  display: flex;
  align-items: center;
  padding-left: 27px;
}

.chip-label {
  margin-left: 10px;
  padding-top: 2px;
}

.chip svg:nth-of-type(2) {
  margin-left: 13px;
}

.chip-x {
  width: 31px;
  height: 31px;
  margin-left: 15px;
  border-radius: 50%;
  background: #fff;
  display: flex;
  align-items: center;
  justify-content: center;
}

.table-search {
  width: 513px;
  height: 55px;
  margin-left: auto;
  border: 2px solid #999;
  border-radius: 6px;
  padding: 0 28px 0 22px;
  display: flex;
  align-items: center;
  justify-content: space-between;
}

.ph-clip {
  width: 355px;
  overflow: hidden;
}

.adv {
  margin-left: 36px;
  margin-right: 26px;
  display: flex;
  align-items: center;
  gap: 9px;
  font-size: 30px;
  color: #222;
}

.table {
  height: 1297px;
  margin-top: 18px;
  border-left: 2px solid #bcc2c6;
  border-top: 2px solid #bcc2c6;
  border-bottom: 2px solid #bcc2c6;
  background: #fff;
  display: flex;
  flex-direction: column;
}

.cols {
  display: grid;
  grid-template-columns: 160px 200px 159px 1fr;
}

.thead {
  height: 63px;
  flex: none;
  background: #f4f6f6;
  border-bottom: 2px solid #bcc2c6;
}

.th {
  display: flex;
  align-items: center;
  padding-left: 26px;
  font-size: 25px;
  color: #666;
}

.th svg {
  flex: none;
}

.th b {
  margin-left: 10px;
  white-space: nowrap;
}

.th .thin {
  font-weight: 400;
  letter-spacing: -0.6px;
}

.th-first {
  padding-left: 25px;
}

.head-check {
  width: 29px;
  height: 30px;
  margin-right: 12px;
  flex: none;
  background: #e8e8e8;
  border: 2px solid #c4c4c4;
  border-bottom-width: 3px;
  border-radius: 5px;
}

.col-sep {
  width: 2px;
  height: 32px;
  margin-left: auto;
  flex: none;
  background: #dcdfe0;
}

.tfilter {
  height: 63px;
  flex: none;
  background: #f4f6f6;
  border-bottom: 2px solid #bcc2c6;
}

.tf {
  display: flex;
  align-items: center;
  padding-left: 25px;
  padding-top: 4px;
}

.tf-last {
  padding-left: 27px;
}

.filter-input {
  height: 38px;
  padding: 1px 0 0 6px;
  border: 2px solid #c8cccc;
  border-radius: 6px;
  font-size: 28px;
  line-height: 32px;
  font-weight: 700;
  color: #666;
  white-space: nowrap;
}

.filter-input.w110 { width: 110px; }
.filter-input.w70 { width: 70px; }
.filter-input.fill { flex: 1; border-right: 0; border-radius: 6px 0 0 6px; }

.funnel {
  margin-left: 11px;
  flex: none;
}

.tband {
  height: 11px;
  flex: none;
  background: #fbfcff;
  border-bottom: 2px solid #d8dadd;
}

.tbody {
  height: 1131px;
  flex: none;
  position: relative;
  overflow: hidden;
}

.tr {
  height: 72px;
  border-bottom: 2px solid #d8dadd;
  font-size: 26.3px;
  color: #222;
}

.tr:nth-child(even) {
  background: #fbfcff;
}

.tr.hover {
  background: #ebebeb;
}

.td {
  display: flex;
  align-items: center;
  padding-left: 36px;
  white-space: nowrap;
}

.td-first {
  padding-left: 67px;
}

.td-cmd {
  padding-left: 37px;
}

.check {
  width: 29px;
  height: 29px;
  margin-right: 10px;
  flex: none;
  border: 3px solid #777;
  border-radius: 4px;
  background: #fff;
}

.mark-box {
  position: absolute;
  left: 501px;
  top: 355px;
  width: 256px;
  height: 286px;
  border: 3px solid #e60012;
}

.tscroll {
  flex: 1;
  padding-top: 9px;
  background: #fff;
}

.tscroll-thumb {
  width: 946px;
  height: 16px;
  border-radius: 8px;
  background: #cdcdcd;
}

.outer-scroll {
  margin-top: 24px;
  height: 15px;
  background: #fff;
}

.outer-thumb {
  width: 1202px;
  height: 15px;
  border-radius: 8px 8px 0 0;
  background: #cdcdcd;
}

/* floating tab on the right edge */
.float-tab {
  position: absolute;
  left: 2432px;
  top: 514px;
  width: 88px;
  height: 72px;
  background: #eaf6ff;
  border-top: 3px solid #0095ff;
  border-bottom: 3px solid #0095ff;
  border-radius: 16px 0 0 16px;
}

.float-tile {
  position: absolute;
  left: 0;
  top: -3px;
  width: 73px;
  height: 72px;
  border-radius: 16px;
  background: linear-gradient(45deg, #3ab6ff 0%, #0095ff 55%);
}
```
